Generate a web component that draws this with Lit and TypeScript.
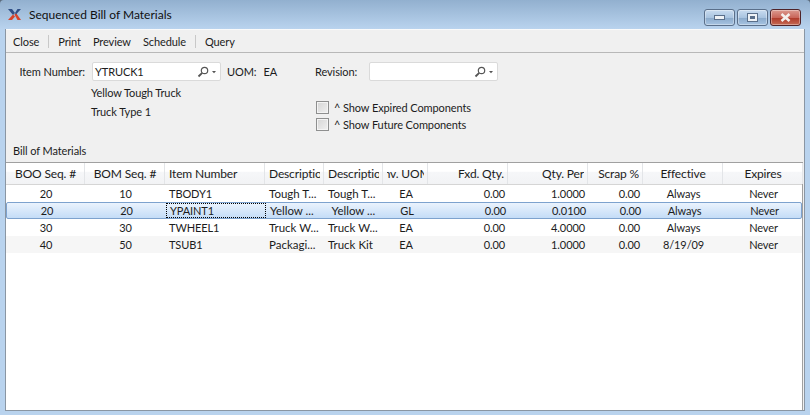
import { LitElement, html, css, svg } from 'lit';
import { customElement } from 'lit/decorators.js';

const columns = [
  { label: 'BOO Seq. #', head: 'c', cell: 'c' },
  { label: 'BOM Seq. #', head: 'c', cell: 'c' },
  { label: 'Item Number', head: 'l', cell: 'l' },
  { label: 'Description', head: 'l', cell: 'l wide' },
  { label: 'Description', head: 'l', cell: 'l wide' },
  { label: 'Inv. UOM', head: 'c', cell: 'c' },
  { label: 'Fxd. Qty.', head: 'r', cell: 'r' },
  { label: 'Qty. Per', head: 'r', cell: 'r' },
  { label: 'Scrap %', head: 'r', cell: 'r' },
  { label: 'Effective', head: 'c', cell: 'c' },
  { label: 'Expires', head: 'c', cell: 'c' },
];

const rows = [
  ['20', '10', 'TBODY1', 'Tough T...', 'Tough T...', 'EA', '0.00', '1.0000', '0.00', 'Always', 'Never'],
  ['20', '20', 'YPAINT1', 'Yellow ...', '\u00a0Yellow ...', 'GL', '0.00', '0.0100', '0.00', 'Always', 'Never'],
  ['30', '30', 'TWHEEL1', 'Truck W...', 'Truck W...', 'EA', '0.00', '4.0000', '0.00', 'Always', 'Never'],
  ['40', '50', 'TSUB1', 'Packagi...', 'Truck Kit', 'EA', '0.00', '1.0000', '0.00', '8/19/09', 'Never'],
];

const searchIcon = svg`<svg class="search" width="24" height="14" viewBox="0 0 24 14">
  <circle cx="8.5" cy="5.5" r="3.2" fill="none" stroke="#555" stroke-width="1.2"/>
  <path d="M6.2 7.8 L2.5 11.5" stroke="#555" stroke-width="1.8" fill="none"/>
  <path d="M16 6 h4 l-2 2.2z" fill="#555"/>
</svg>`;

@customElement('app-root')
export class AppRoot extends LitElement {
  static styles = css`
    :host {
      display: block;
      width: 810px;
      height: 415px;
      overflow: hidden;
      font-family: Lato, 'Open Sans', sans-serif;
      font-size: 11px;
      letter-spacing: -0.1px;
      color: #1c1c1c;
      background: #5b6b7c;
    }
    .window {
      box-sizing: border-box;
      width: 810px;
      height: 415px;
      display: flex;
      flex-direction: column;
      padding: 0 5px 4px;
      border-radius: 4px 4px 0 0;
      background: linear-gradient(180deg, #92b0cf 0, #b9d3ee 29px, #b9d3ee 100%);
    }
    .titlebar {
      flex: none;
      height: 29px;
      display: flex;
      align-items: center;
      font-size: 12px;
      letter-spacing: 0;
      color: #101010;
    }
    .logo {
      margin: 0 8px 0 3px;
    }
    .title {
      flex: 1;
    }
    .caption {
      display: flex;
      gap: 2px;
      align-self: flex-start;
      margin: 9px 4px 0 0;
    }
    .cap {
      box-sizing: border-box;
      width: 31px;
      height: 17px;
      border: 1px solid #5a6f8a;
      border-radius: 3px;
      display: flex;
      align-items: center;
      justify-content: center;
      background: linear-gradient(180deg, #c9dcf0 0, #a9c4e0 50%, #8cabcc 55%, #a7c4e2 100%);
      box-shadow: inset 0 0 0 1px rgba(255, 255, 255, 0.35);
    }
    .cap.close {
      border-color: #4f2328;
      background: linear-gradient(180deg, #dc9a90 0, #c9665a 50%, #b03c2c 55%, #c56a55 100%);
    }
    .client {
      flex: 1;
      display: flex;
      flex-direction: column;
      min-height: 0;
      background: #f0f0f0;
      border-right: 1px solid #8a96a3;
      border-bottom: 1px solid #8a96a3;
      border-left: 1px solid #8a96a3;
    }
    .toolbar {
      flex: none;
      height: 22px;
      display: flex;
      align-items: center;
      gap: 12px;
      border-top: 1px solid #fafafa;
      border-bottom: 1px solid #b8b8b8;
      padding-left: 7px;
    }
    .toolbar i {
      width: 1px;
      height: 13px;
      background: #c8c8c8;
      margin: 0 -3px;
    }
    .form {
      flex: none;
      height: 109px;
      display: flex;
      flex-direction: column;
      position: relative;
    }
    .top {
      display: flex;
      align-items: center;
      margin-top: 9px;
      height: 19px;
    }
    .lbl-item {
      width: 79px;
      text-align: right;
      margin-right: 7px;
    }
    .combo {
      box-sizing: border-box;
      width: 129px;
      height: 19px;
      background: #fff;
      border: 1px solid #dadada;
      border-radius: 2px;
      display: flex;
      align-items: center;
      justify-content: space-between;
      padding-left: 2px;
    }
    .uom {
      margin-left: 6px;
      width: 88px;
      display: flex;
      gap: 7px;
    }
    .lbl-rev {
      width: 54px;
    }
    .lower {
      display: flex;
      margin-top: 4px;
    }
    .desc {
      margin-left: 85px;
      width: 225px;
      display: flex;
      flex-direction: column;
      gap: 4px;
      line-height: 15px;
    }
    .checks {
      display: flex;
      flex-direction: column;
      gap: 3px;
      margin-top: 15px;
    }
    .check {
      display: flex;
      align-items: center;
      height: 14px;
    }
    .box {
      box-sizing: border-box;
      width: 13px;
      height: 13px;
      border: 1px solid #8e8f8f;
      background: linear-gradient(135deg, #d5d5d5, #f0f0f0);
      box-shadow: inset 0 0 0 1px #f4f4f4;
      margin-right: 5px;
    }
    .section {
      position: absolute;
      left: 7px;
      top: 90px;
      line-height: 15px;
    }
    .table {
      flex: 1;
      min-height: 0;
      background: #fff;
      border-top: 1px solid #a0a0a0;
      border-right: 1px solid #a0a0a0;
      margin-right: 1px;
    }
    .row {
      display: grid;
      grid-template-columns: 79px 80px 100px 59px 59px 45px 80px 80px 55px 80px 80px;
      height: 17px;
      line-height: 17px;
    }
    .head {
      height: 22px;
      line-height: 21px;
      font-size: 12px;
      letter-spacing: -0.15px;
      background: linear-gradient(180deg, #fff 0, #fff 40%, #f6f7f9 42%, #f2f3f5 100%);
      border-bottom: 1px solid #d5d5d5;
      box-sizing: border-box;
    }
    .th {
      border-right: 1px solid #e3e5e8;
      box-sizing: border-box;
      padding: 0 3px 0 4px;
      min-width: 0;
    }
    .th span {
      display: flex;
      overflow: hidden;
      white-space: nowrap;
    }
    .th span.l {
      justify-content: flex-start;
    }
    .th span.c {
      justify-content: center;
    }
    .th span.r {
      justify-content: flex-end;
    }
    .cell {
      padding: 0 3px 0 4px;
      box-sizing: border-box;
      overflow: hidden;
      white-space: nowrap;
    }
    .cell.l {
      text-align: left;
    }
    .cell.c {
      text-align: center;
    }
    .cell.r {
      text-align: right;
    }
    .cell.wide {
      font-size: 11.5px;
      letter-spacing: 0;
    }
    .alt {
      background: #f6f6f6;
    }
    .sel {
      border: 1px solid #7da2ce;
      border-radius: 2px;
      background: linear-gradient(180deg, #eaf3fd 0, #c4dcf7 100%);
      box-sizing: border-box;
      line-height: 15px;
    }
    .focus {
      outline: 1px dotted #000;
      outline-offset: -1px;
    }
  `;

  render() {
    return html`
      <div class="window">
        <div class="titlebar">
          <svg class="logo" width="13" height="11" viewBox="0 0 13 11">
            <path d="M0 0 h4 l3 4 -2 2z" fill="#2f4f86"/>
            <path d="M0 11 L5 5.5 7 7.5 4 11z" fill="#d8432a"/>
            <path d="M6.5 5.5 L9.5 11 H13 L8 4z" fill="#d8432a"/>
            <path d="M7 4 L9.5 0 H13 L8 5.5z" fill="#2f4f86"/>
          </svg>
          <span class="title">Sequenced Bill of Materials</span>
          <div class="caption">
            <div class="cap">
              <svg width="11" height="5"><rect x=".5" y=".5" width="10" height="4" fill="#eef2f6" stroke="#5a6f8a"/></svg>
            </div>
            <div class="cap">
              <svg width="11" height="9"><rect x=".5" y=".5" width="10" height="8" fill="#eef2f6" stroke="#5a6f8a"/><rect x="3" y="3" width="5" height="3" fill="#5a6f8a"/></svg>
            </div>
            <div class="cap close">
              <svg width="11" height="9"><path d="M1.5 1 L9.5 8 M9.5 1 L1.5 8" stroke="#f4f0ee" stroke-width="2.6"/></svg>
            </div>
          </div>
        </div>
        <div class="client">
          <div class="toolbar">
            <span>Close</span><i></i><span>Print</span><span>Preview</span><span>Schedule</span><i></i><span>Query</span>
          </div>
          <div class="form">
            <div class="top">
              <span class="lbl-item">Item Number:</span>
              <div class="combo"><span>YTRUCK1</span>${searchIcon}</div>
              <div class="uom"><span>UOM:</span><span>EA</span></div>
              <span class="lbl-rev">Revision:</span>
              <div class="combo"><span></span>${searchIcon}</div>
            </div>
            <div class="lower">
              <div class="desc">
                <span>Yellow Tough Truck</span>
                <span>Truck Type 1</span>
              </div>
              <div class="checks">
                <div class="check"><span class="box"></span>^ Show Expired Components</div>
                <div class="check"><span class="box"></span>^ Show Future Components</div>
              </div>
            </div>
            <div class="section">Bill of Materials</div>
          </div>
          <div class="table">
            <div class="row head">
              ${columns.map((c) => html`<div class="th"><span class=${c.head}>${c.label}</span></div>`)}
            </div>
            ${rows.map(
              (r, i) => html`
                <div class="row ${i === 1 ? 'sel' : ''} ${i === 3 ? 'alt' : ''}">
                  ${r.map(
                    (v, j) =>
                      html`<div class="cell ${columns[j].cell} ${i === 1 && j === 2 ? 'focus' : ''}">${v}</div>`,
                  )}
                </div>
              `,
            )}
          </div>
        </div>
      </div>
    `;
  }
}
